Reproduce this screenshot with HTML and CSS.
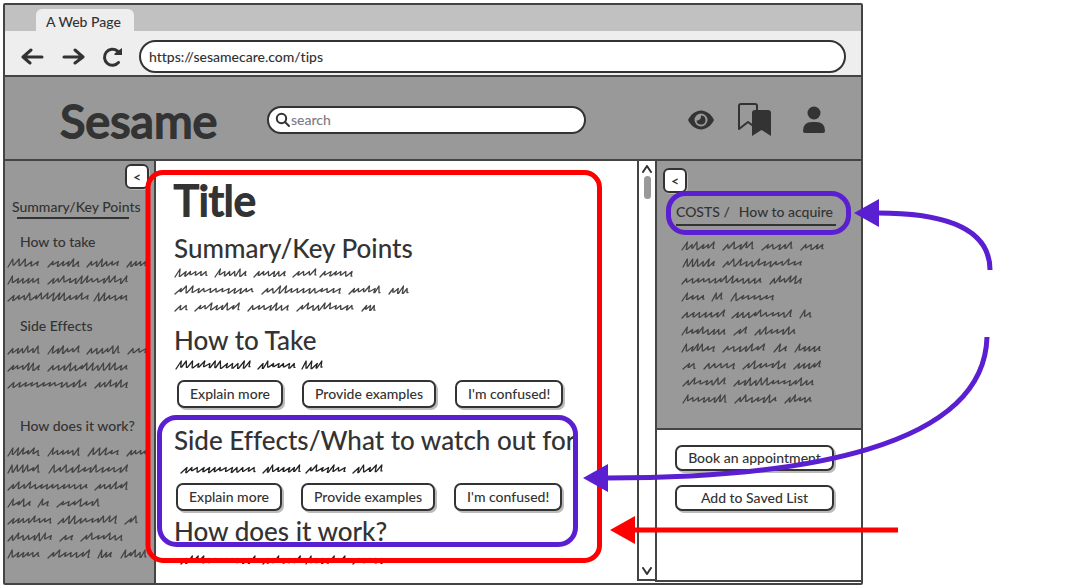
FILE: index.html
```html
<!DOCTYPE html>
<html lang="en">
<head>
<meta charset="utf-8">
<title>Sesame tips</title>
<link rel="stylesheet" href="styles.css">
</head>
<body>
<div class="browser">
  <div class="tabs"><div class="tab">A Web Page</div></div>
  <div class="toolbar">
    <div class="nav-buttons">
      <button class="icon-button" aria-label="Back"><svg width="24" height="20" viewBox="0 0 24 20"><path class="nav-line" d="M21 10H2M10 3 2 10l7 6"/></svg></button>
      <button class="icon-button" aria-label="Forward"><svg width="24" height="20" viewBox="0 0 24 20"><path class="nav-line" d="M3 10h19M14 3l8 7-8 6"/></svg></button>
      <button class="icon-button" aria-label="Reload"><svg width="24" height="20" viewBox="0 0 24 20"><path class="nav-line" d="M17.500 15.500A8 8 0 1 1 16.500 4"/><path class="solid" d="M21 1v7h-7.500V6.500z"/></svg></button>
    </div>
    <input class="address" type="text" aria-label="Address" value="https://sesamecare.com/tips">
  </div>
  <header class="site-header">
    <div class="brand">Sesame</div>
    <div class="search">
      <svg width="16" height="16" viewBox="0 0 16 16"><circle class="thin" cx="6.500" cy="6.500" r="4.700"/><path class="thin" d="m10 10 4 4"/></svg>
      <input class="search-input" type="text" aria-label="Search" placeholder="search">
    </div>
    <div class="header-icons">
      <button class="icon-button" aria-label="View"><svg width="26" height="20" viewBox="0 0 26 20"><path class="solid" d="M0 10C3 4 8 .5 13 .5S23 4 26 10c-3 6-8 9.500-13 9.500S3 16 0 10z"/><circle class="ring" cx="13" cy="10" r="6.500"/><path class="pupil" d="M13 5.500a4.500 4.500 0 1 1-4.500 4.900c2.700.6 4.900-1.900 4.500-4.900z"/></svg></button>
      <button class="icon-button" aria-label="Saved"><svg width="34" height="34" viewBox="0 0 34 34"><path class="thin" d="M19 7V3q0-2-2-2H3Q1 1 1 3v23l9-7 4 3"/><path class="solid" d="M14 10q0-3 3-3h13q3 0 3 3v23l-9.500-6L14 33z"/></svg></button>
      <button class="icon-button" aria-label="Account"><svg width="24" height="28" viewBox="0 0 24 28"><circle class="solid" cx="12" cy="7" r="6.500"/><path class="solid" d="M1 25q0-9 9-9h4q9 0 9 9 0 2-2 2H3q-2 0-2-2z"/></svg></button>
    </div>
  </header>
  <div class="content">
    <aside class="sidebar">
      <button class="collapse collapse-end" aria-label="Collapse contents">&lt;</button>
      <a class="side-title" href="#summary">Summary/Key Points</a>
      <a class="side-link" href="#take">How to take</a>
      <div class="scribble" data-lines="0-32 40-73 79-112 119-140;0-33 40-121;0-82 86-121"></div>
      <a class="side-link side-gap" href="#effects">Side Effects</a>
      <div class="scribble" data-lines="0-33 40-73 79-113 120-140;0-33 40-121;0-80 87-121"></div>
      <a class="side-link side-gap-large" href="#work">How does it work?</a>
      <div class="scribble" data-lines="0-33 40-73 80-112 119-140;0-33 41-121;0-81 87-121;0-24 30-42 49-93;0-45 50-110 117-131;0-45 52-66 73-116;0-33 40-83 90-105 113-140"></div>
    </aside>
    <main class="article">
      <h1 class="title">Title</h1>
      <h2 class="heading" id="summary">Summary/Key Points</h2>
      <div class="scribble" data-lines="0-34 40-73 79-112 118-143 145-179;0-80 87-167 174-207 214-235;0-14 20-66 73-115 122-180 187-202"></div>
      <h2 class="heading heading-gap" id="take">How to Take</h2>
      <div class="scribble bold" data-lines="1-77 83-122 127-149"></div>
      <div class="actions">
        <button class="action">Explain more</button><button class="action">Provide examples</button><button class="action">I'm confused!</button>
      </div>
      <h2 class="heading heading-after" id="effects">Side Effects/What to watch out for</h2>
      <div class="scribble bold spaced" data-lines="6-82 88-127 131-172 178-209"></div>
      <div class="actions actions-near">
        <button class="action">Explain more</button><button class="action">Provide examples</button><button class="action">I'm confused!</button>
      </div>
      <h2 class="heading" id="work">How does it work?</h2>
      <div class="scribble bold spaced" data-lines="6-82 88-127 131-172 178-209"></div>
    </main>
    <div class="scrollbar" aria-hidden="true">
      <svg width="12" height="8" viewBox="0 0 12 8"><path class="thin" d="m2 7 4-6 4 6"/></svg>
      <div class="thumb"></div>
      <svg width="12" height="8" viewBox="0 0 12 8"><path class="thin" d="m2 1 4 6 4-6"/></svg>
    </div>
    <aside class="costs">
      <div class="costs-info">
        <button class="collapse" aria-label="Collapse costs">&lt;</button>
        <div class="costs-title"><a class="costs-link" href="#costs">COSTS /</a><a class="costs-link" href="#acquire">How to acquire</a></div>
        <div class="scribble costs-text" data-lines="0-34 41-73 80-112 119-143;1-34 41-121;0-81 88-121;0-24 30-42 49-93;0-44 50-111 118-131;0-45 52-66 73-115;0-34 41-84 92-106 113-140;1-15 22-54 61-105 112-140;1-45 52-133;1-46 53-96 103-131"></div>
      </div>
      <div class="costs-actions">
        <button class="action wide">Book an appointment</button>
        <button class="action wide">Add to Saved List</button>
      </div>
    </aside>
  </div>
</div>
<svg class="annotations" width="1072" height="588" viewBox="0 0 1072 588" aria-hidden="true">
  <g class="note-red"><rect x="148" y="172.500" width="451.500" height="388" rx="15"/><path d="M634 530h264"/><path class="head" d="m610 530 25-14v28z"/></g>
  <g class="note-purple"><rect x="159.500" y="417.500" width="416" height="127" rx="17"/><rect x="668.500" y="193.500" width="180" height="39" rx="17"/>
  <path d="M878 213C950 213 990 231 990 270"/><path class="head" d="m854 213 25-14v28z"/>
  <path d="M987 337C984 448 800 478 607 478"/><path class="head" d="m583 478 25-14v28z"/></g>
</svg>
<script src="scribble.js"></script>
</body>
</html>
```
FILE: styles.css
```css
:root { --ink: #333; --line: #444; --gray: #999; --red: #f00; --purple: #5a1fd1; }
* { box-sizing: border-box; }
body { margin: 0; background: #fff; color: var(--ink); font: 500 14px/20px Lato, "Open Sans", sans-serif; font-variant-ligatures: none; overflow: hidden; position: relative; }
button, input { font: inherit; color: inherit; font-variant-ligatures: none; }
a { color: inherit; text-decoration: none; }
.browser { margin: 3px 209px 3px 3px; border: 2px solid var(--line); border-radius: 2px; white-space: nowrap; }
.tabs { display: flex; align-items: flex-end; height: 26px; padding-left: 31px; background: #c1c1c1; }
.tab { height: 22px; padding: 3px 13px 0 10px; line-height: 20px; border-radius: 6px 6px 0 0; background: #eee; }
.toolbar { display: flex; align-items: center; gap: 14px; height: 46px; padding: 7px 15px 0; background: #eee; border-bottom: 2px solid var(--line); }
.nav-buttons { display: flex; gap: 16px; padding-left: 1px; }
.icon-button { display: flex; padding: 0; border: 0; background: none; }
.address { flex: 1; min-width: 0; height: 33px; padding: 0 8px; border: 2px solid var(--ink); border-radius: 17px; background: #fff; }
.site-header { display: flex; align-items: center; height: 84px; padding: 4px 35px 0 55px; background: var(--gray); border-bottom: 2px solid var(--line); }
.brand { flex: 0 0 207px; font-size: 47px; line-height: 56px; font-weight: 400; -webkit-text-stroke: 2px var(--ink); }
.search { display: flex; align-items: center; flex: 0 1 319px; height: 28px; padding: 0 6px; border: 2px solid var(--ink); border-radius: 14px; background: #fff; }
.search-input { flex: 1; min-width: 0; padding: 0; border: 0; background: none; }
.search-input::placeholder { color: #7d7a86; opacity: 1; }
.header-icons { display: flex; align-items: center; gap: 28px; margin-left: auto; }
.header-icons .icon-button:nth-child(2) { padding-right: 2px; margin-left: -4px; }
.nav-line, .thin { fill: none; stroke: var(--ink); stroke-width: 3; stroke-linecap: round; stroke-linejoin: round; }
.thin { stroke-width: 2; }
.solid { fill: var(--ink); }
.ring { fill: var(--gray); }
.pupil { fill: var(--ink); }
.content { display: grid; grid-template-columns: 151px minmax(0, 1fr) 18px 206px; height: 422px; }
.sidebar { background: var(--gray); border-right: 2px solid var(--line); padding: 3px 0 0 2px; overflow: hidden; }
.collapse { display: block; width: 24px; height: 25px; padding: 0; border: 2px solid var(--ink); border-radius: 6px; background: #fff; box-shadow: 1px 1px 0 #bbb; font-weight: 700; line-height: 18px; }
.collapse-end { margin-left: auto; margin-right: 5px; }
.side-title { display: block; margin: 8px 0 12px 5px; line-height: 20px; }
.side-title::after { content: ""; display: block; width: 112px; margin-left: 5px; border-top: 2px solid var(--ink); }
.side-link { display: block; padding-left: 13px; height: 23px; line-height: 22px; }
.side-gap { margin: 10px 0 3px; }
.side-gap-large { margin: 23px 0 5px; }
.scribble { display: grid; grid-auto-rows: 17px; overflow: hidden; }
.scribble svg { display: block; width: 100%; height: 17px; fill: none; stroke: #444; stroke-width: 1.300; stroke-linecap: round; stroke-linejoin: round; }
.scribble.bold svg { stroke: #222; }
.article { padding: 17px 0 0 18px; overflow: hidden; }
.title { margin: 0 0 10px; font-size: 42px; line-height: 44px; font-weight: 400; -webkit-text-stroke: 2px var(--ink); }
.heading { margin: 0; font-size: 26px; line-height: 32px; font-weight: 500; }
.heading-gap { margin-top: 9px; }
.heading-after { margin-top: 16px; }
.spaced { margin-top: 4px; }
.actions { display: flex; gap: 19px; margin: 7px 0 0 3px; }
.actions-near { margin: 6px 0 4px 2px; }
.action { height: 28px; padding: 0 11px; border: 2px solid var(--ink); border-radius: 7px; background: #fff; box-shadow: 2px 2px 0 #bbb; line-height: 20px; }
.scrollbar { display: flex; flex-direction: column; align-items: center; margin-bottom: 2px; padding: 4px 0; border: solid var(--line); border-width: 0 0 2px 2px; background: #fff; }
.thumb { width: 7px; height: 23px; margin: 3px 0 auto; border-radius: 4px; background: var(--gray); }
.costs { display: flex; flex-direction: column; margin-bottom: 1px; border-left: 2px solid var(--line); border-bottom: 2px solid var(--line); }
.costs-info { height: 269px; padding: 7px 6px 0; background: var(--gray); border-bottom: 2px solid var(--line); }
.costs-title { display: flex; gap: 9px; width: 160px; height: 26px; margin: 7px 0 11px 13px; line-height: 24px; border-bottom: 2px solid var(--ink); }
.costs-text { margin-left: 18px; }
.costs-actions { display: grid; gap: 14px; padding: 15px 27px 0 18px; }
.wide { height: 26px; padding: 0; }
.annotations { position: absolute; top: 0; left: 0; pointer-events: none; fill: none; stroke-width: 5; }
.note-red { stroke: var(--red); }
.note-purple { stroke: var(--purple); }
.head { stroke: none; }
.note-red .head { fill: var(--red); }
.note-purple .head { fill: var(--purple); }
```
FILE: scribble.js
```js
// Draws handwriting-like placeholder lines; each word is given as "start-end".
let seed = 7;
function random() {
  seed = (seed * 16807) % 2147483647;
  return seed / 2147483647;
}
function drawWord(start, end) {
  const count = Math.max(2, Math.round((end - start) / 6));
  const step = (end - start - 2) / count;
  let x = start + 1;
  let path = `M${x} 13`;
  for (let i = 0; i < count; i += 1) {
    const peak = x + step * (0.8 + random() * 0.3);
    const top = random() > 0.7 ? 5 : 7.5;
    const low = 10.5 + random() * 2;
    x += step;
    path += ` L${peak.toFixed(1)} ${top} L${(x - 1).toFixed(1)} ${low.toFixed(1)} l1 0`;
  }
  return path;
}
document.querySelectorAll(".scribble").forEach((block) => {
  block.dataset.lines.split(";").forEach((line) => {
    const svg = document.createElementNS("http://www.w3.org/2000/svg", "svg");
    const path = document.createElementNS("http://www.w3.org/2000/svg", "path");
    path.setAttribute("d", line.split(" ").map((word) => drawWord(...word.split("-").map(Number))).join(" "));
    svg.append(path);
    block.append(svg);
  });
});
```
